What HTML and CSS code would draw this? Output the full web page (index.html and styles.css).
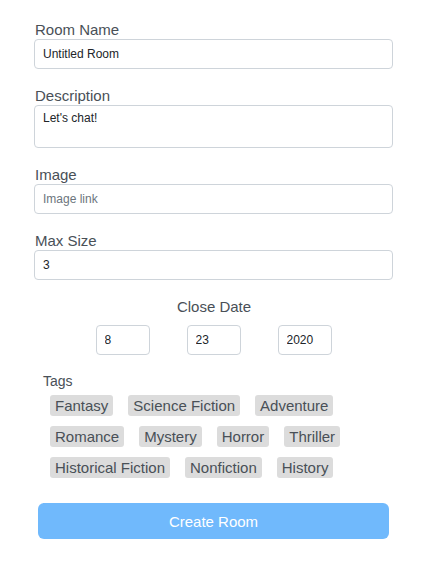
FILE: index.html
```html
<!DOCTYPE html>
<html lang="en">
<head>
    <title>Create Room</title>
    <link rel="stylesheet" href="styles.css">
</head>
<body>
<form class="room-form">
    <div class="field">
        <label>Room Name</label>
        <input type="text" value="Untitled Room">
    </div>
    <div class="field">
        <label>Description</label>
        <textarea>Let's chat!</textarea>
    </div>
    <div class="field">
        <label>Image</label>
        <input type="text" placeholder="Image link">
    </div>
    <div class="field">
        <label>Max Size</label>
        <input type="text" value="3">
    </div>
    <div class="close-date">
        <label>Close Date</label>
        <div class="date-inputs">
            <input type="text" value="8">
            <input type="text" value="23">
            <input type="text" value="2020">
        </div>
    </div>
    <div class="tags">
        <label>Tags</label>
        <div class="tag-list">
            <span class="tag">Fantasy</span>
            <span class="tag">Science Fiction</span>
            <span class="tag">Adventure</span>
            <span class="tag">Romance</span>
            <span class="tag">Mystery</span>
            <span class="tag">Horror</span>
            <span class="tag">Thriller</span>
            <span class="tag">Historical Fiction</span>
            <span class="tag">Nonfiction</span>
            <span class="tag">History</span>
        </div>
    </div>
    <button type="button" class="create">Create Room</button>
</form>
</body>
</html>
```

FILE: styles.css
```css
body{
    margin: 0;
    background: #fff;
    font-family: "Liberation Sans", Arial, sans-serif;
    color: #495057;
}
.room-form{
    width: 359px;
    margin-left: 34px;
    padding-top: 21px;
}
.field{
    display: flex;
    flex-direction: column;
    margin-bottom: 18px;
}
label{
    font-size: 15px;
    line-height: 18px;
    padding-left: 1px;
}
input, textarea{
    box-sizing: border-box;
    font-family: "Liberation Sans", Arial, sans-serif;
    font-size: 12px;
    color: #212529;
    border: 1px solid #ced4da;
    border-radius: 4px;
    padding: 0 8px;
    outline: none;
}
.field input{
    width: 100%;
    height: 30px;
}
.field textarea{
    width: 100%;
    height: 43px;
    padding-top: 5px;
    resize: none;
}
input::placeholder{
    color: #6c757d;
}
.close-date{
    display: flex;
    flex-direction: column;
    align-items: center;
}
.date-inputs{
    display: flex;
    gap: 37px;
    margin-top: 9px;
}
.date-inputs input{
    width: 54px;
    height: 30px;
}
.tags{
    margin-top: 17px;
}
.tags label{
    font-size: 14px;
    padding-left: 9px;
}
.tag-list{
    display: flex;
    flex-wrap: wrap;
    column-gap: 15px;
    row-gap: 10px;
    margin-top: 5px;
    padding-left: 16px;
    width: 300px;
}
.tag{
    background-color: #dcdcdc;
    border-radius: 3px;
    padding: 0 5px;
    font-size: 15px;
    line-height: 21px;
}
.create{
    display: block;
    width: 351px;
    height: 36px;
    margin-top: 25px;
    margin-left: 4px;
    background-color: #70b9fc;
    border: none;
    border-radius: 6px;
    color: #fff;
    font-family: "Liberation Sans", Arial, sans-serif;
    font-size: 15px;
}
```
